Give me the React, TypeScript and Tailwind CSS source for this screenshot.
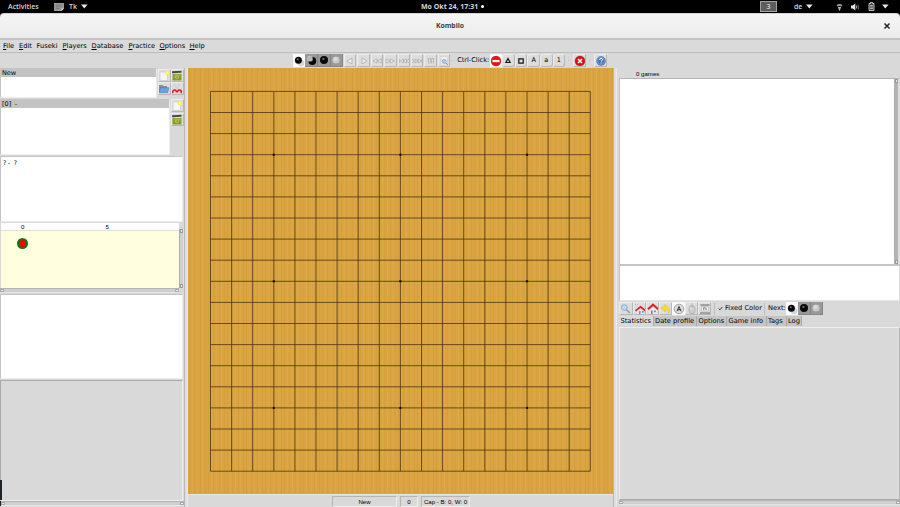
import React from "react";

const SANS = "font-['DejaVu_Sans','Noto_Sans',sans-serif]";
const ARIAL = "font-['Liberation_Sans',Arial,sans-serif]";
const SHELL = "font-['Open_Sans','Noto_Sans',sans-serif]";

const RAISED = "border border-t-[#ececec] border-l-[#ececec] border-r-[#b6b6b6] border-b-[#b6b6b6]";

function Caret({ className = "" }: { className?: string }) {
  return (
    <svg className={className} width="7" height="5" viewBox="0 0 7 5">
      <path d="M0 .5h6.6L3.3 4.6z" fill="#e8e8e8" />
    </svg>
  );
}

function TopBar() {
  return (
    <header className={`flex h-[13px] shrink-0 items-center bg-black text-[7px] leading-[13px] font-semibold text-[#d6d6d6] ${SHELL}`}>
      <span className="ml-2 w-[46px] whitespace-nowrap">Activities</span>
      <svg width="10" height="8" viewBox="0 0 10 8">
        <path d="M0 0h10v5.5L7.5 8H0z" fill="#9a9a9a" />
        <path d="M1.5 2h7M1.5 3.8h6M1.5 5.6h4" stroke="#696969" strokeWidth=".6" />
        <path d="M7.5 8V5.5H10z" fill="#d5d5d5" />
      </svg>
      <span className="ml-[5px] w-[12px]">Tk</span>
      <Caret />
      <span className="ml-[333px] w-[60px] whitespace-nowrap text-[7px] font-bold">Mo Okt 24, 17:31</span>
      <span className="size-[3px] rounded-full bg-white" />
      <span className="ml-[276px] flex h-[11px] w-[17px] items-center justify-center border border-[#a0a0a0] bg-[#5d5d5d] text-[7px]">3</span>
      <span className="ml-[17px] w-[12px]">de</span>
      <Caret />
      <svg className="ml-[23px]" width="7" height="8" viewBox="0 0 7 8">
        <path d="M.5 2.2C2.2.6 4.8.6 6.500 2.200L5.300 3.600C4.300 2.800 2.700 2.800 1.700 3.600z" fill="#9a9a9a" />
        <path d="M1.900 3.900h3.200L3.900 7.500h-.8z" fill="#b8b8b8" />
      </svg>
      <svg className="ml-[8px]" width="9" height="8" viewBox="0 0 9 8">
        <path d="M0 2.600h1.800L4.300.5v7L1.800 5.400H0z" fill="#e8e8e8" />
        <path d="M5.300 2.500q1 1.500 0 3" stroke="#bbb" fill="none" />
        <path d="M6.900 1.400q1.600 2.600 0 5.200" stroke="#666" fill="none" />
      </svg>
      <svg className="ml-[8px]" width="8" height="9" viewBox="0 0 8 9">
        <path d="M1 1.500h1.500V.5h2v1H6v7H1z" fill="#444" stroke="#cfcfcf" strokeWidth=".9" />
        <path d="M2.200 3.500h2.600M2.200 5h2.600M2.200 6.500h2.600" stroke="#d0d0d0" strokeWidth=".8" />
      </svg>
      <Caret className="ml-[6px]" />
    </header>
  );
}

function TitleBar() {
  return (
    <div className="shrink-0 bg-black">
      <div className={`grid h-[25px] grid-cols-[1fr_auto_1fr] items-center rounded-t-[4px] border-t border-[#d5d5d5] bg-linear-to-b from-[#f6f6f6] to-[#ebebeb] pr-[9px] pl-[9px] text-[6.800px] font-bold text-[#3a3f41] ${SHELL}`}>
        <span />
        <h1>Kombilo</h1>
        <svg className="justify-self-end" width="8" height="8" viewBox="0 0 8 8">
          <path d="M1.500 1.500l5 5M6.500 1.500l-5 5" stroke="#20272a" strokeWidth="1.500" />
        </svg>
      </div>
    </div>
  );
}

const menus: [string, string, boolean][] = [
  ["File", "w-[16px]", true],
  ["Edit", "w-[17.500px]", true],
  ["Fuseki", "w-[26px]", false],
  ["Players", "w-[29px]", true],
  ["Database", "w-[37px]", true],
  ["Practice", "w-[31px]", true],
  ["Options", "w-[30px]", true],
  ["Help", "w-[20px]", true],
];

function MenuBar() {
  return (
    <nav className={`flex h-[15px] shrink-0 items-center border-t-2 border-b border-t-[#c3c3c3] border-b-[#bdbdbd] bg-[#dadada] pl-[3px] text-[6.700px] leading-[10px] text-black ${SANS}`}>
      {menus.map(([label, width, marked]) => (
        <span key={label} className={`${width} whitespace-nowrap`}>
          <span className={marked ? "underline decoration-[0.600px] underline-offset-1" : ""}>{label[0]}</span>
          {label.slice(1)}
        </span>
      ))}
    </nav>
  );
}

type IconName =
  | "blackwhite" | "whiteblack" | "black" | "white" | "prev" | "next" | "back" | "forward"
  | "first" | "last" | "columns" | "find" | "noentry" | "triangle" | "square"
  | "close" | "help" | "page" | "database" | "folder" | "scissors"
  | "zoom" | "home" | "home2" | "undo" | "circleA" | "mouse" | "tag";

const stoneDark = (x: number, y: number, r: number) => (
  <>
    <circle cx={x} cy={y} r={r} fill="#080808" />
    <circle cx={x - 0.6} cy={y - 1} r={r * 0.28} fill="#737373" />
  </>
);

function Icon({ name }: { name: IconName }) {
  const faint = { fill: "#eee", stroke: "#a5a5a5", strokeWidth: 0.7 };
  const art: Record<IconName, React.ReactNode> = {
    blackwhite: <><circle cx="8" cy="8" r="3" fill="#d8d8d8" stroke="#bbb" strokeWidth=".4" />{stoneDark(5.4, 5.300, 3.500)}</>,
    whiteblack: <>{stoneDark(7.300, 7, 3.900)}<circle cx="4.800" cy="4.700" r="2.900" fill="#b8b8b8" /></>,
    black: stoneDark(6, 6, 4),
    white: <><circle cx="6" cy="6" r="3.600" fill="#c7c7c7" /><circle cx="5.500" cy="5" r="2" fill="#dadada" /></>,
    prev: <path d="M8 3v6L3 6z" {...faint} />,
    next: <path d="M4 3v6l5-3z" {...faint} />,
    back: <path d="M6 4v4L2 6zM10.300 4v4l-4-2z" {...faint} />,
    forward: <path d="M2 4v4l4-2zM6.300 4v4l4-2z" {...faint} />,
    first: <path d="M1.300 4v4M5.500 4v4L2.500 6zM8.500 4v4l-3-2zM11.300 4v4l-3-2z" {...faint} />,
    last: <path d="M.8 4v4l3-2zM4 4v4l3-2zM7.200 4v4l3-2zM11 4v4" {...faint} />,
    columns: <path d="M2.800 3.500h2.600V5.500L5 8.500M6.600 3.500h2.600M3.500 4v4.500M8.500 4v4.500M6.600 3.500v5" fill="none" stroke="#b0b0b0" strokeWidth=".8" />,
    find: <><path d="M3 1.500h5l1.500 1.500v7H3z" fill="#f2f2f2" stroke="#c6c6c6" strokeWidth=".5" /><circle cx="6.200" cy="6.300" r="2" fill="#b7d3f2" stroke="#7a9dc4" strokeWidth=".8" /><path d="M7.800 8l1.800 1.800" stroke="#777" /></>,
    noentry: <><circle cx="6" cy="6" r="5.200" fill="#e01818" /><path d="M2.400 4.900h7.200v2.200H2.400z" fill="#fff" /></>,
    triangle: <path d="M6 3.500L8.100 7.500H3.900z" fill="none" stroke="#151515" strokeWidth="1.200" />,
    square: <path d="M3.800 3.900h4.400v4.200H3.800z" fill="none" stroke="#151515" strokeWidth="1.200" />,
    close: <><circle cx="6" cy="6" r="5" fill="#d41414" stroke="#a11" strokeWidth=".4" /><path d="M4 4l4 4M8 4L4 8" stroke="#fff" strokeWidth="1.500" /></>,
    help: <><circle cx="6" cy="6" r="4.700" fill="#4274b8" /><circle cx="6" cy="6" r="3.500" fill="none" stroke="#9cbce4" strokeWidth=".5" /><path d="M4.600 5q0-1.600 1.500-1.600T7.500 4.800Q7.400 5.600 6 6.500M6 7.500v1" fill="none" stroke="#fff" strokeWidth="1" /></>,
    page: <><path d="M2 2h7.500v8.500H2z" fill="#f5f5f5" stroke="#c4c4c4" strokeWidth=".6" /><circle cx="9" cy="3" r="2.200" fill="#f6ef53" /><circle cx="9" cy="3" r=".9" fill="#fffba5" /></>,
    database: <><path d="M1 1.300l9.500-.5v2L1 3.300z" fill="#4a4a46" /><path d="M1.500 4h9v6.500h-9z" fill="#8c9a25" /><path d="M2.500 4.500h7v2h-7z" fill="#a3b03c" /><circle cx="6" cy="7.300" r="1.800" fill="#c3cc70" /><circle cx="6.200" cy="7.300" r="1" fill="#8a9630" /></>,
    folder: <><path d="M1 2h3.500l1 1H9v6H1z" fill="#858f98" /><path d="M2.500 4.700H11l-1.300 5H1z" fill="#6ca2dc" stroke="#3c76b4" strokeWidth=".5" /></>,
    scissors: <><path d="M3 1l3 5M9 1L6 6" stroke="#cfcfcf" strokeWidth="1.200" /><path d="M1.700 10.200V8.800q0-1.700 2-1.700 1.800 0 1.700 2.300M10.300 10.200V8.800q0-1.700-2-1.700-1.800 0-1.700 2.300" fill="none" stroke="#d91820" strokeWidth="1.500" /></>,
    zoom: <><circle cx="4.300" cy="4.500" r="2.800" fill="#c0daf5" stroke="#83acd4" strokeWidth="1" /><path d="M6.500 6.700L10 10" stroke="#999" strokeWidth="1.500" /></>,
    home: <><path d="M3 6.500h7V11H3z" fill="#e8e8e8" /><path d="M1.500 7.800L6.500 3.800l5 4" fill="none" stroke="#dc1f28" strokeWidth="1.700" /><path d="M5 8h1.500v3H5z" fill="#888" /><path d="M8 8h1.500v1.800H8z" fill="#508cc8" /><path d="M1 1.500h4" stroke="#aaa" strokeWidth=".7" strokeDasharray="1 1" /></>,
    home2: <><path d="M2.500 5.500h7.500V11H2.500z" fill="#ececec" /><path d="M1 6.200L6 1.700l5.200 4.500" fill="none" stroke="#dc1f28" strokeWidth="2" /><path d="M4 7.500h1.500V11H4z" fill="#777" /><path d="M7 7.500h1.800v1.800H7z" fill="#508cc8" /></>,
    undo: <path d="M1 5l4.300-3.700v2.200c4.200 0 5.500 3 3.200 6.800.3-2.700-.7-3.700-3.200-3.700v2.300z" fill="#f2df2e" stroke="#cfb71b" strokeWidth=".4" />,
    circleA: <><circle cx="6" cy="6" r="4.800" fill="#ddd" stroke="#777" strokeWidth=".6" /><path d="M4 8.200L6 3.500l2 4.700M4.700 6.700h2.600" fill="none" stroke="#222" strokeWidth=".9" /></>,
    mouse: <><path d="M3 5.500q0-3 3-3t3 3v2.200q0 3-3 3t-3-3z" fill="#cfcfcf" stroke="#a5a5a5" strokeWidth=".7" /><path d="M6 0v5" stroke="#aaa" strokeWidth=".7" /><path d="M4.200 4.500h1.500v1.800H4.200z" fill="#eee" /></>,
    tag: <><path d="M1.500 2h9M1 10h10" stroke="#666" strokeWidth="1" /><path d="M2.500 3.500h7v4.500h-7z" fill="#eee" stroke="#aaa" strokeWidth=".5" /><path d="M4.700 4.500v2.500M4.700 4.800h1.500M7 4.500v2.500" fill="none" stroke="#555" strokeWidth=".7" /></>,
  };
  return <svg className="size-3 shrink-0" viewBox="0 0 12 12">{art[name]}</svg>;
}

function Tool({ name, look = "raised", className = "" }: { name: IconName; look?: "raised" | "on" | "dark" | "flat"; className?: string }) {
  const looks = {
    raised: `bg-[#dddddd] ${RAISED}`,
    on: "bg-[#fbfbfb]",
    dark: "border-r border-b border-[#858585] bg-[#999999]",
    flat: "",
  };
  return <button className={`flex h-[13px] shrink-0 items-center justify-center overflow-hidden ${looks[look]} ${className || "w-[12.500px]"}`}><Icon name={name} /></button>;
}

function MarkTool({ children }: { children?: React.ReactNode }) {
  return <span className={`flex h-[13px] w-[12.600px] items-center justify-center rounded-[3px] bg-[#dcdcdc] text-[6.500px] leading-none text-black ${RAISED}`}>{children}</span>;
}

const dot = "size-px bg-[#bdbdbd]";

function BoardToolbar() {
  const nav: IconName[] = ["prev", "next", "back", "forward", "first", "last", "columns", "find"];
  return (
    <div className={`flex h-[15px] items-center pl-[105px] text-[6.500px] text-black ${SANS}`}>
      <Tool name="blackwhite" look="on" className="w-[12px]" />
      <Tool name="whiteblack" look="dark" className="w-[13px]" />
      <Tool name="black" look="dark" className="w-[12.500px]" />
      <Tool name="white" look="dark" className="w-[12.500px]" />
      <div className="ml-px flex gap-[1px]">
        {nav.map((n) => <Tool key={n} name={n} className="w-[12.400px]" />)}
      </div>
      <span className={`ml-px ${dot}`} />
      <span className="ml-[5px] w-[32.500px] whitespace-nowrap text-[6.600px]">Ctrl-Click:</span>
      <Tool name="noentry" look="on" className="w-[12.500px]" />
      <MarkTool><Icon name="triangle" /></MarkTool>
      <MarkTool><Icon name="square" /></MarkTool>
      <MarkTool>A</MarkTool>
      <MarkTool>a</MarkTool>
      <MarkTool>1</MarkTool>
      <span className={`ml-[3px] ${dot}`} />
      <Tool name="close" className="ml-[4px] w-[13px]" />
      <span className={`ml-[3px] ${dot}`} />
      <Tool name="help" className="ml-[4px] w-[13px]" />
    </div>
  );
}

const LINES = Array.from({ length: 19 }, (_, i) => i);
const STARS = [3, 9, 15];
const STEP = 21.1;
const X0 = 22.500;
const Y0 = 23.400;

function Board() {
  const end = STEP * 18;
  return (
    <svg className="block h-[426px] w-[425px]" viewBox="0 0 425 426">
      <defs>
        <pattern id="grain" width="19" height="426" patternUnits="userSpaceOnUse">
          <rect width="19" height="426" fill="#d9a441" />
          {[1, 4, 6, 9, 12, 14, 17].map((x, i) => (
            <rect key={x} x={x} width="1" height="426" fill={i % 2 ? "#e0ad4a" : "#d09b3b"} opacity=".5" />
          ))}
        </pattern>
      </defs>
      <rect width="425" height="426" fill="url(#grain)" />
      <g stroke="#4a3511" strokeWidth=".8">
        {LINES.map((i) => (
          <React.Fragment key={i}>
            <path d={`M${X0} ${Y0 + i * STEP}h${end}`} />
            <path d={`M${X0 + i * STEP} ${Y0}v${end}`} />
          </React.Fragment>
        ))}
      </g>
      {STARS.flatMap((r) => STARS.map((c) => <circle key={`${r}-${c}`} cx={X0 + c * STEP} cy={Y0 + r * STEP} r="1.200" fill="#1b1305" />))}
    </svg>
  );
}

function StatusBar() {
  const cell = "h-[11px] border border-t-[#b5b5b5] border-l-[#b5b5b5] border-r-[#eee] border-b-[#eee] text-center leading-[10px] whitespace-nowrap";
  return (
    <div className={`flex flex-1 items-end gap-[3px] border-t border-[#e8e8e8] pl-[144px] text-[6.100px] text-black ${ARIAL}`}>
      <span className={`${cell} w-[65px]`}>New</span>
      <span className={`${cell} w-[18px]`}>0</span>
      <span className={`${cell} w-[49px]`}>Cap - B: 0, W: 0</span>
    </div>
  );
}

function HScroll() {
  return (
    <div className="flex h-[5px] justify-between border-y border-t-[#b5b5b5] border-b-[#e4e4e4] bg-[#cfcfcf]">
      <span className="w-[4px] border border-[#aaa] bg-[#eee]" />
      <span className="w-[4px] border border-[#aaa] bg-[#eee]" />
    </div>
  );
}

function VScroll({ full = false }: { full?: boolean }) {
  return (
    <div className={`flex w-[5px] shrink-0 flex-col justify-between border-x border-l-[#b0b0b0] border-r-[#e0e0e0] ${full ? "bg-[#b4b4b4]" : "bg-[#d0d0d0]"}`}>
      <span className="h-[4px] border border-[#999] bg-[#eee]" />
      <span className="h-[4px] border border-[#999] bg-[#eee]" />
    </div>
  );
}

function LeftPane() {
  const box = "border border-t-[#c4c4c4] border-l-[#c4c4c4] border-r-[#ececec] border-b-[#ececec] bg-white";
  return (
    <aside className={`flex flex-col pt-[15px] text-[6.500px] text-black ${SANS}`}>
      <div className="flex h-[31px]">
        <div className={`h-[30px] w-[157px] ${box}`}>
          <p className="h-[8px] bg-[#c3c3c3] pl-px leading-[9px]">New</p>
        </div>
        <div className="ml-px grid grid-cols-[13px_13px] content-start pt-px">
          <Tool name="page" className="w-[12.500px]" />
          <Tool name="database" className="w-[12.500px]" />
          <Tool name="folder" className="w-[12.500px]" />
          <Tool name="scissors" className="w-[12.500px]" />
        </div>
      </div>
      <div className="flex h-[57px]">
        <div className={`h-[56px] w-[170px] ${box}`}>
          <p className={`flex h-[8px] gap-[3.500px] bg-[#c3c3c3] pl-px text-[6.500px] leading-[9px] ${SANS}`}><span>[0]</span><span>-</span></p>
        </div>
        <div className="ml-px flex flex-col">
          <Tool name="page" className="w-[12.500px]" />
          <Tool name="database" className="mt-px w-[12.500px]" />
        </div>
      </div>
      <div className={`flex h-[66px] gap-[2.500px] ${box} mr-px pl-[2px] pt-[2px] text-[6.300px] leading-[7px]`}><span>?</span><span className="-ml-px">-</span><span className="ml-px">?</span></div>
      <div className="flex h-[66px] pt-[1px]">
        <div className="w-[179px] pl-px">
          <div className={`flex h-[7px] bg-white pl-[20px] text-[6.200px] leading-[7px] ${ARIAL}`}>
            <span className="w-[84.500px]">0</span><span>5</span>
          </div>
          <div className="h-[58px] border-t border-[#e0e0d0] bg-[#ffffdf] pt-[7px] pl-[16px]">
            <div className="size-[11px] rounded-full border-2 border-[#087a12] bg-[#f60505]" />
          </div>
        </div>
        <div className="flex pt-[6px]"><VScroll /></div>
      </div>
      <div className="w-[179px]"><HScroll /></div>
      <div className={`mt-[1px] mr-px h-[85px] ${box}`} />
      <div className="mt-px mr-px flex-1 border border-t-[#aaa] border-l-[#aaa] border-r-[#eee] border-b-[#eee]">
        <div className="flex h-full items-end"><span className="-ml-px h-[20px] w-[1.500px] bg-[#1f2527]" /></div>
      </div>
      <div className="mb-px border-l-[1.500px] border-[#1f2527]"><HScroll /></div>
    </aside>
  );
}

function Sash() {
  return <div className="mt-[15px] flex justify-between bg-[#dddee2]"><span className="w-px bg-[#b9b9b9]" /><span className="w-px bg-[#e9e9ee]" /></div>;
}

const tabs: [string, string][] = [
  ["Statistics", "w-[34.500px]"],
  ["Date profile", "w-[43.500px]"],
  ["Options", "w-[30px]"],
  ["Game info", "w-[39.500px]"],
  ["Tags", "w-[20px]"],
  ["Log", "w-[15.500px]"],
];

function RightPane() {
  return (
    <main className={`flex min-w-0 flex-col pt-[15px] pl-[2px] text-[6.700px] text-black ${SANS}`}>
      <p className={`h-[10px] pl-[17px] text-[6.100px] leading-[12px] ${ARIAL}`}>0 games</p>
      <div className="flex h-[187px] border border-t-[#b5b5b5] border-l-[#c5c5c5] border-r-[#ddd] border-b-[#c5c5c5]">
        <div className="flex-1 bg-white" />
        <VScroll full />
      </div>
      <div className="h-[36px] border border-t-[#c4c4c4] border-l-[#c5c5c5] border-r-[#ddd] border-b-[#e5e5e5] bg-white" />
      <div className="flex h-[15px] items-center">
        <Tool name="zoom" className="w-[14px]" />
        <Tool name="home" className="w-[13px]" />
        <Tool name="home2" className="w-[13px]" />
        <Tool name="undo" className="w-[13px]" />
        <Tool name="circleA" look="on" className="w-[13px]" />
        <Tool name="mouse" className="w-[13px]" />
        <Tool name="tag" className="w-[13px]" />
        <span className="ml-[3px] h-[12px] w-px bg-[#bcbcbc]" />
        <svg className="ml-[3px] size-[5px]" viewBox="0 0 5 5"><path d="M.7 2.500l1.300 1.300L4.300 1" fill="none" stroke="#222" strokeWidth=".9" /></svg>
        <span className="ml-[2px] w-[39px] whitespace-nowrap">Fixed Color</span>
        <span className="h-[12px] w-px bg-[#bcbcbc]" />
        <span className="ml-[3px] w-[18px] whitespace-nowrap">Next:</span>
        <Tool name="blackwhite" look="on" className="w-[12px]" />
        <Tool name="black" look="dark" className="w-[12.500px]" />
        <Tool name="white" look="dark" className="w-[12px]" />
      </div>
      <div className="flex h-[11px]">
        {tabs.map(([label, width], i) => (
          <span key={label} className={`${width} h-[10px] border-r border-[#aaa] pl-[1.500px] leading-[10px] whitespace-nowrap ${i ? "bg-[#c5c5c5]" : "bg-[#dadada]"}`}>{label}</span>
        ))}
      </div>
      <div className="flex-1 border border-t-[#eee] border-l-[#eee] border-r-[#b9b9b9] border-b-[#aaa]" />
      <div className="mb-[2px]"><HScroll /></div>
    </main>
  );
}

export default function App() {
  return (
    <div className="flex h-[507px] w-[900px] flex-col overflow-hidden bg-[#d9d9d9]">
      <TopBar />
      <TitleBar />
      <MenuBar />
      <div className="grid min-h-0 flex-1 grid-cols-[184px_4px_425px_4px_283px]">
        <LeftPane />
        <Sash />
        <section className="flex flex-col">
          <BoardToolbar />
          <Board />
          <StatusBar />
        </section>
        <Sash />
        <RightPane />
      </div>
    </div>
  );
}
